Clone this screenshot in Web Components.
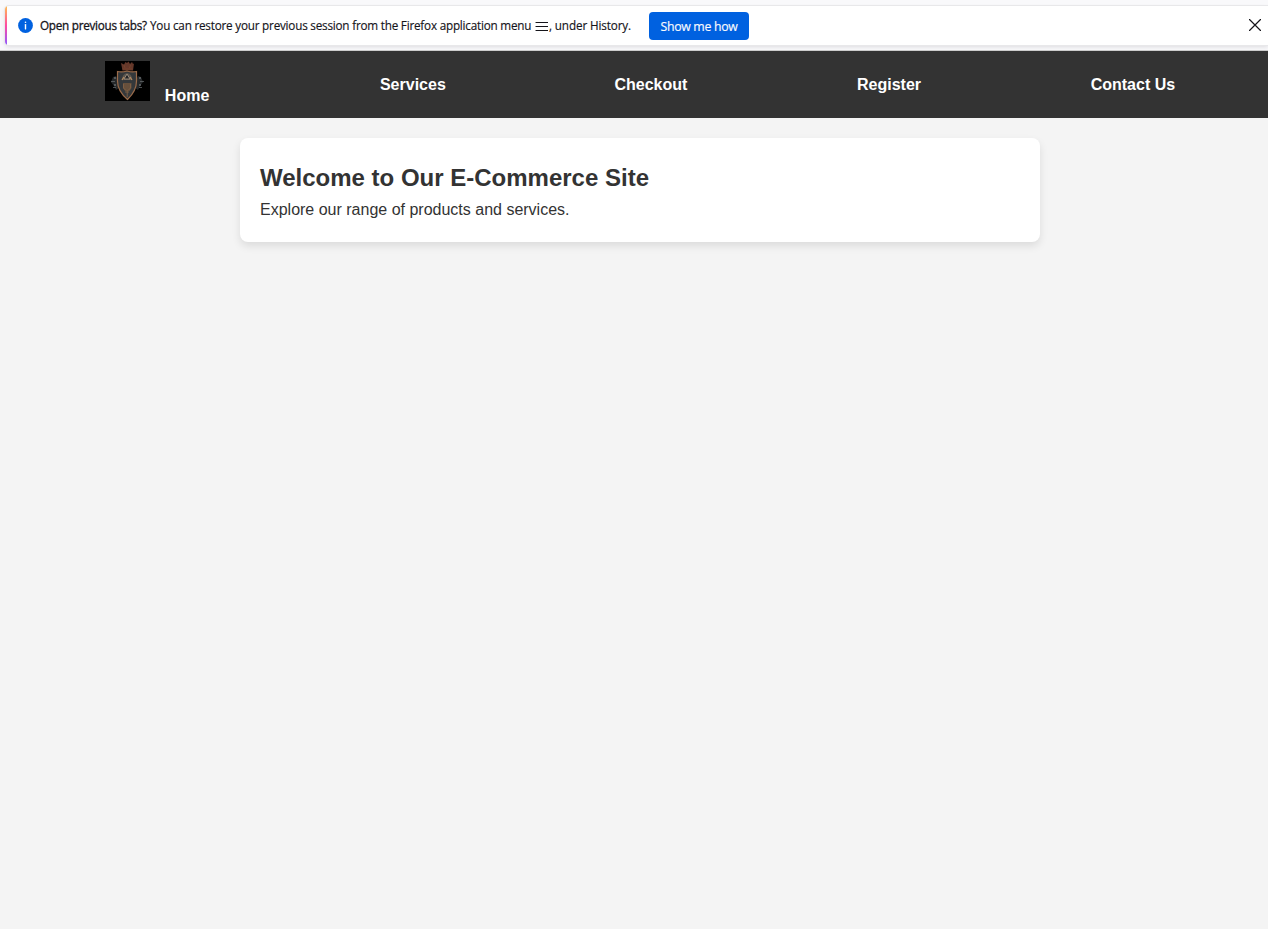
<!DOCTYPE html>
<html lang="en">
<head>
<meta charset="utf-8">
<title>E-Commerce Site</title>
<style>
html { overflow: hidden; }
body { margin: 0; height: 929px; overflow: hidden; background: #f4f4f4; color: #333; font: 16px/1.6 "Liberation Sans", Arial, sans-serif; }
</style>
</head>
<body>
<session-notice>
  <strong slot="title">Open previous tabs?</strong>
  <span slot="message">You can restore your previous session from the Firefox application menu</span>
  <span slot="after">, under History.</span>
  <span slot="action">Show me how</span>
</session-notice>
<site-page>
  <site-nav slot="nav">
    <nav-item><site-crest slot="icon"></site-crest>Home</nav-item>
    <nav-item>Services</nav-item>
    <nav-item>Checkout</nav-item>
    <nav-item>Register</nav-item>
    <nav-item>Contact Us</nav-item>
  </site-nav>
  <content-card><span slot="heading">Welcome to Our E-Commerce Site</span>Explore our range of products and services.</content-card>
</site-page>
<script>
const define = (name, html) => customElements.define(name, class extends HTMLElement {
  constructor() {
    super();
    const t = document.createElement('template');
    t.innerHTML = html;
    this.attachShadow({ mode: 'open' }).append(t.content.cloneNode(true));
  }
});

define('session-notice', `
<style>
:host { display: block; box-sizing: border-box; height: 51px; padding: 6px 0 6px 5px; background: #f9f9fb; border-bottom: 1px solid #ccc; font: 11.7px/16px "Open Sans", "Noto Sans", sans-serif; color: #15141a; overflow: hidden; }
.bar { height: 39px; box-sizing: border-box; display: flex; align-items: center; background: linear-gradient(#ffbd4f, #ff4aa2 50%, #9059ff) left / 2px 100% no-repeat #fff; border-radius: 4px 0 0 4px; box-shadow: 0 0 0 1px #e8e8ea, 0 2px 4px rgba(58,57,68,.15); padding: 0 7px 0 13px; white-space: nowrap; }
.info { flex: none; margin: 0 7px 1px 0; }
.text { display: flex; align-items: center; width: 609px; height: 16px; flex: none; margin-bottom: 1px; }
.t, .m, .a { flex: none; -webkit-text-stroke: .15px; }
.t { width: 110px; letter-spacing: -.25px; -webkit-text-stroke: .3px; }
.m { width: 385px; letter-spacing: -.205px; }
.a { letter-spacing: -.12px; }
.menu { flex: none; margin: 2px 1px 0 0; }
::slotted(strong) { font-weight: 400; }
button { flex: none; width: 100px; height: 28px; margin: 1px 0 0; padding: 2px 0 0; border: 0; border-radius: 4px; background: #0061e0; color: #fbfbfe; font: 12.3px/20px "Open Sans", "Noto Sans", sans-serif; letter-spacing: -.3px; -webkit-text-stroke: .15px; }
.close { margin: 0 0 1px auto; flex: none; }
</style>
<div class="bar">
  <svg class="info" width="15" height="15" viewBox="0 0 15 15"><circle cx="7.5" cy="7.5" r="7.4" fill="#0061e0"/><path d="M7.5 6.6v4.3" stroke="#fff" stroke-width="1.4" stroke-linecap="round"/><circle cx="7.5" cy="4.2" r=".8" fill="#fff"/></svg>
  <div class="text">
    <span class="t"><slot name="title"></slot></span><span class="m"><slot name="message"></slot></span>
    <svg class="menu" width="13" height="16" viewBox="0 0 13 16"><path d="M1 4.500h11.500M1 8.500h11.500M1 12.500h11.500" stroke="#15141a" stroke-width="1.2" stroke-linecap="round"/></svg>
    <span class="a"><slot name="after"></slot></span>
  </div>
  <button><slot name="action"></slot></button>
  <svg class="close" width="12" height="12" viewBox="0 0 12 12"><path d="M.5.5l11 11M11.500.5l-11 11" stroke="#15141a" stroke-width="1.2" stroke-linecap="round"/></svg>
</div>`);

define('site-page', `
<style>
:host { display: block; width: 1280px; }
</style>
<slot name="nav"></slot><slot></slot>`);

define('site-nav', `
<style>
:host { display: block; background: #333; padding: 10px 20px; }
nav { display: flex; justify-content: space-around; align-items: center; height: 47px; }
</style>
<nav><slot></slot></nav>`);

define('nav-item', `
<style>
:host { display: block; color: #fff; font-weight: 700; white-space: nowrap; }
:host(:nth-child(2)) { padding-left: 1px; margin-right: -1px; }
</style>
<slot name="icon"></slot><slot></slot>`);

define('site-crest', `
<style>
:host { display: inline-block; width: 45px; height: 40px; margin-right: 15px; line-height: 0; vertical-align: baseline; }
svg { display: block; }
</style>
<svg width="45" height="40" viewBox="0 0 45 40">
  <path d="M0 0h45v40H0z" fill="#000"/>
  <g transform="translate(0 -2)"><g fill="#25282a"><path d="M8 18l3-1 2 4 1 8-3 2-2-4-3-4zM36 18l-3-1-2 4-1 8 3 2 2-4 3-4z"/></g>
  <g fill="#666a6c"><path d="M9 18h2v2H9zM6 22h4v1H6zM9 25h2v2H9zM8 28h3v1H8zM34 18h2v2h-2zM35 22h4v1h-4zM34 25h2v2h-2zM34 28h3v1h-3z" opacity=".75"/></g></g>
  <path d="M16 2l3 1.500L20.500 1 22 2l1.500-1.500L25 3l2-2 1 2 1-.5-1 7H17.500z" fill="#65382a"/>
  <path d="M17.500 8h10M19 4l1 3M25.500 4l-1 3" stroke="#77452f" stroke-width=".8"/>
  <path d="M12.500 10.500Q17 11.500 22 10q5 1.500 9.500.5V20q0 10-9 18.500Q12.500 30 12.500 20z" fill="#34383b" stroke="#9a6b4a" stroke-width="1.200"/>
  <path d="M17 19q0-6 5.200-7 5 1 5 7" fill="#5b554d"/>
  <path d="M22 13l-3 5h6z" fill="#232527" stroke="#a09180" stroke-width=".9"/>
  <path d="M17 19l2-3M27 19l-2-3" stroke="#b38a60" stroke-width="1.300"/>
  <path d="M18 22h8.500v5l-2 3h-4.500l-2-3z" fill="#67503c"/>
  <path d="M18.500 23v4l2 2M25.500 23v4l-2 2M22.200 29v7M20 31h4" fill="none" stroke="#826044" stroke-width=".9"/>
</svg>`);

define('content-card', `
<style>
:host { display: block; box-sizing: border-box; width: 800px; height: 104px; margin: 20px auto; padding: 21px 20px 19px; background: #fff; border-radius: 8px; box-shadow: 0 4px 8px rgba(0,0,0,.1); }
h2, p { margin: 0; }
h2 { font-size: 24px; }
</style>
<h2><slot name="heading"></slot></h2>
<p><slot></slot></p>`);
</script>
</body>
</html>
